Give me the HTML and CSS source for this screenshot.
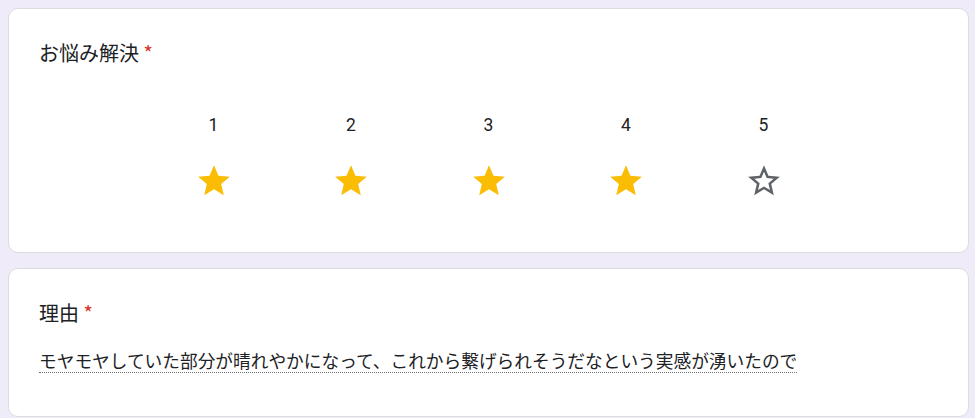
FILE: index.html
```html
<!DOCTYPE html>
<html lang="ja">
<head>
    <meta charset="UTF-8">
    <meta name="viewport" content="width=device-width, initial-scale=1.0">
    <title>お悩み解決</title>
    <link rel="stylesheet" href="styles.css">
</head>
<body>
    <div class="card">
        <div class="question-title">お悩み解決 <span class="required">*</span></div>
        <div class="rating">
            <div class="rating-item">
                <div class="rating-label">1</div>
                <svg class="star filled" viewBox="0 0 24 24"><path d="M12 17.27L18.18 21l-1.64-7.03L22 9.24l-7.19-.61L12 2 9.19 8.63 2 9.24l5.46 4.730L5.82 21z"/></svg>
            </div>
            <div class="rating-item">
                <div class="rating-label">2</div>
                <svg class="star filled" viewBox="0 0 24 24"><path d="M12 17.27L18.18 21l-1.64-7.03L22 9.24l-7.19-.61L12 2 9.19 8.63 2 9.24l5.46 4.73L5.82 21z"/></svg>
            </div>
            <div class="rating-item">
                <div class="rating-label">3</div>
                <svg class="star filled" viewBox="0 0 24 24"><path d="M12 17.27L18.18 21l-1.64-7.03L22 9.24l-7.19-.61L12 2 9.19 8.63 2 9.24l5.46 4.73L5.82 21z"/></svg>
            </div>
            <div class="rating-item">
                <div class="rating-label">4</div>
                <svg class="star filled" viewBox="0 0 24 24"><path d="M12 17.27L18.18 21l-1.64-7.03L22 9.24l-7.19-.61L12 2 9.19 8.63 2 9.24l5.46 4.73L5.82 21z"/></svg>
            </div>
            <div class="rating-item">
                <div class="rating-label">5</div>
                <svg class="star empty" viewBox="0 0 24 24"><path d="M22 9.24l-7.19-.62L12 2 9.19 8.63 2 9.24l5.46 4.73L5.82 21 12 17.27 18.18 21l-1.63-7.03L22 9.24zM12 15.4l-3.76 2.27 1-4.28-3.32-2.88 4.38-.38L12 6.1l1.71 4.04 4.38.38-3.32 2.88 1 4.28L12 15.4z"/></svg>
            </div>
        </div>
    </div>

    <div class="card card-answer">
        <div class="question-title">理由 <span class="required">*</span></div>
        <div class="answer">モヤモヤしていた部分が晴れやかになって、これから繋げられそうだなという実感が湧いたので</div>
    </div>
</body>
</html>
```

FILE: styles.css
```css
body {
    margin: 0;
    padding: 8px 6px 0 8px;
    background: #f0ebf8;
    font-family: Roboto, "Noto Sans CJK JP", sans-serif;
    color: #202124;
}

.card {
    background: #fff;
    border: 1px solid #dadce0;
    border-radius: 10px;
    padding: 30px 30px 52px 30px;
    margin-bottom: 15px;
}

.card-answer {
    padding-bottom: 43px;
}

.question-title {
    font-family: "Noto Sans CJK JP", sans-serif;
    font-size: 20px;
    line-height: 28px;
}

.required {
    color: #d93025;
}

.rating {
    display: flex;
    justify-content: center;
    margin-top: 46px;
}

.rating-item {
    width: 137.5px;
    display: flex;
    flex-direction: column;
    align-items: center;
}

.rating-label {
    font-size: 17.5px;
    line-height: 24px;
    margin-bottom: 25px;
}

.star {
    width: 38px;
    height: 38px;
    display: block;
}

.star.filled {
    fill: #fbbc04;
}

.star.empty {
    fill: #5f6368;
}

.answer {
    display: inline-block;
    margin-top: 21px;
    font-family: "Noto Sans CJK JP", sans-serif;
    font-size: 17.7px;
    line-height: 24px;
    border-bottom: 1px dotted #70757a;
}
```
